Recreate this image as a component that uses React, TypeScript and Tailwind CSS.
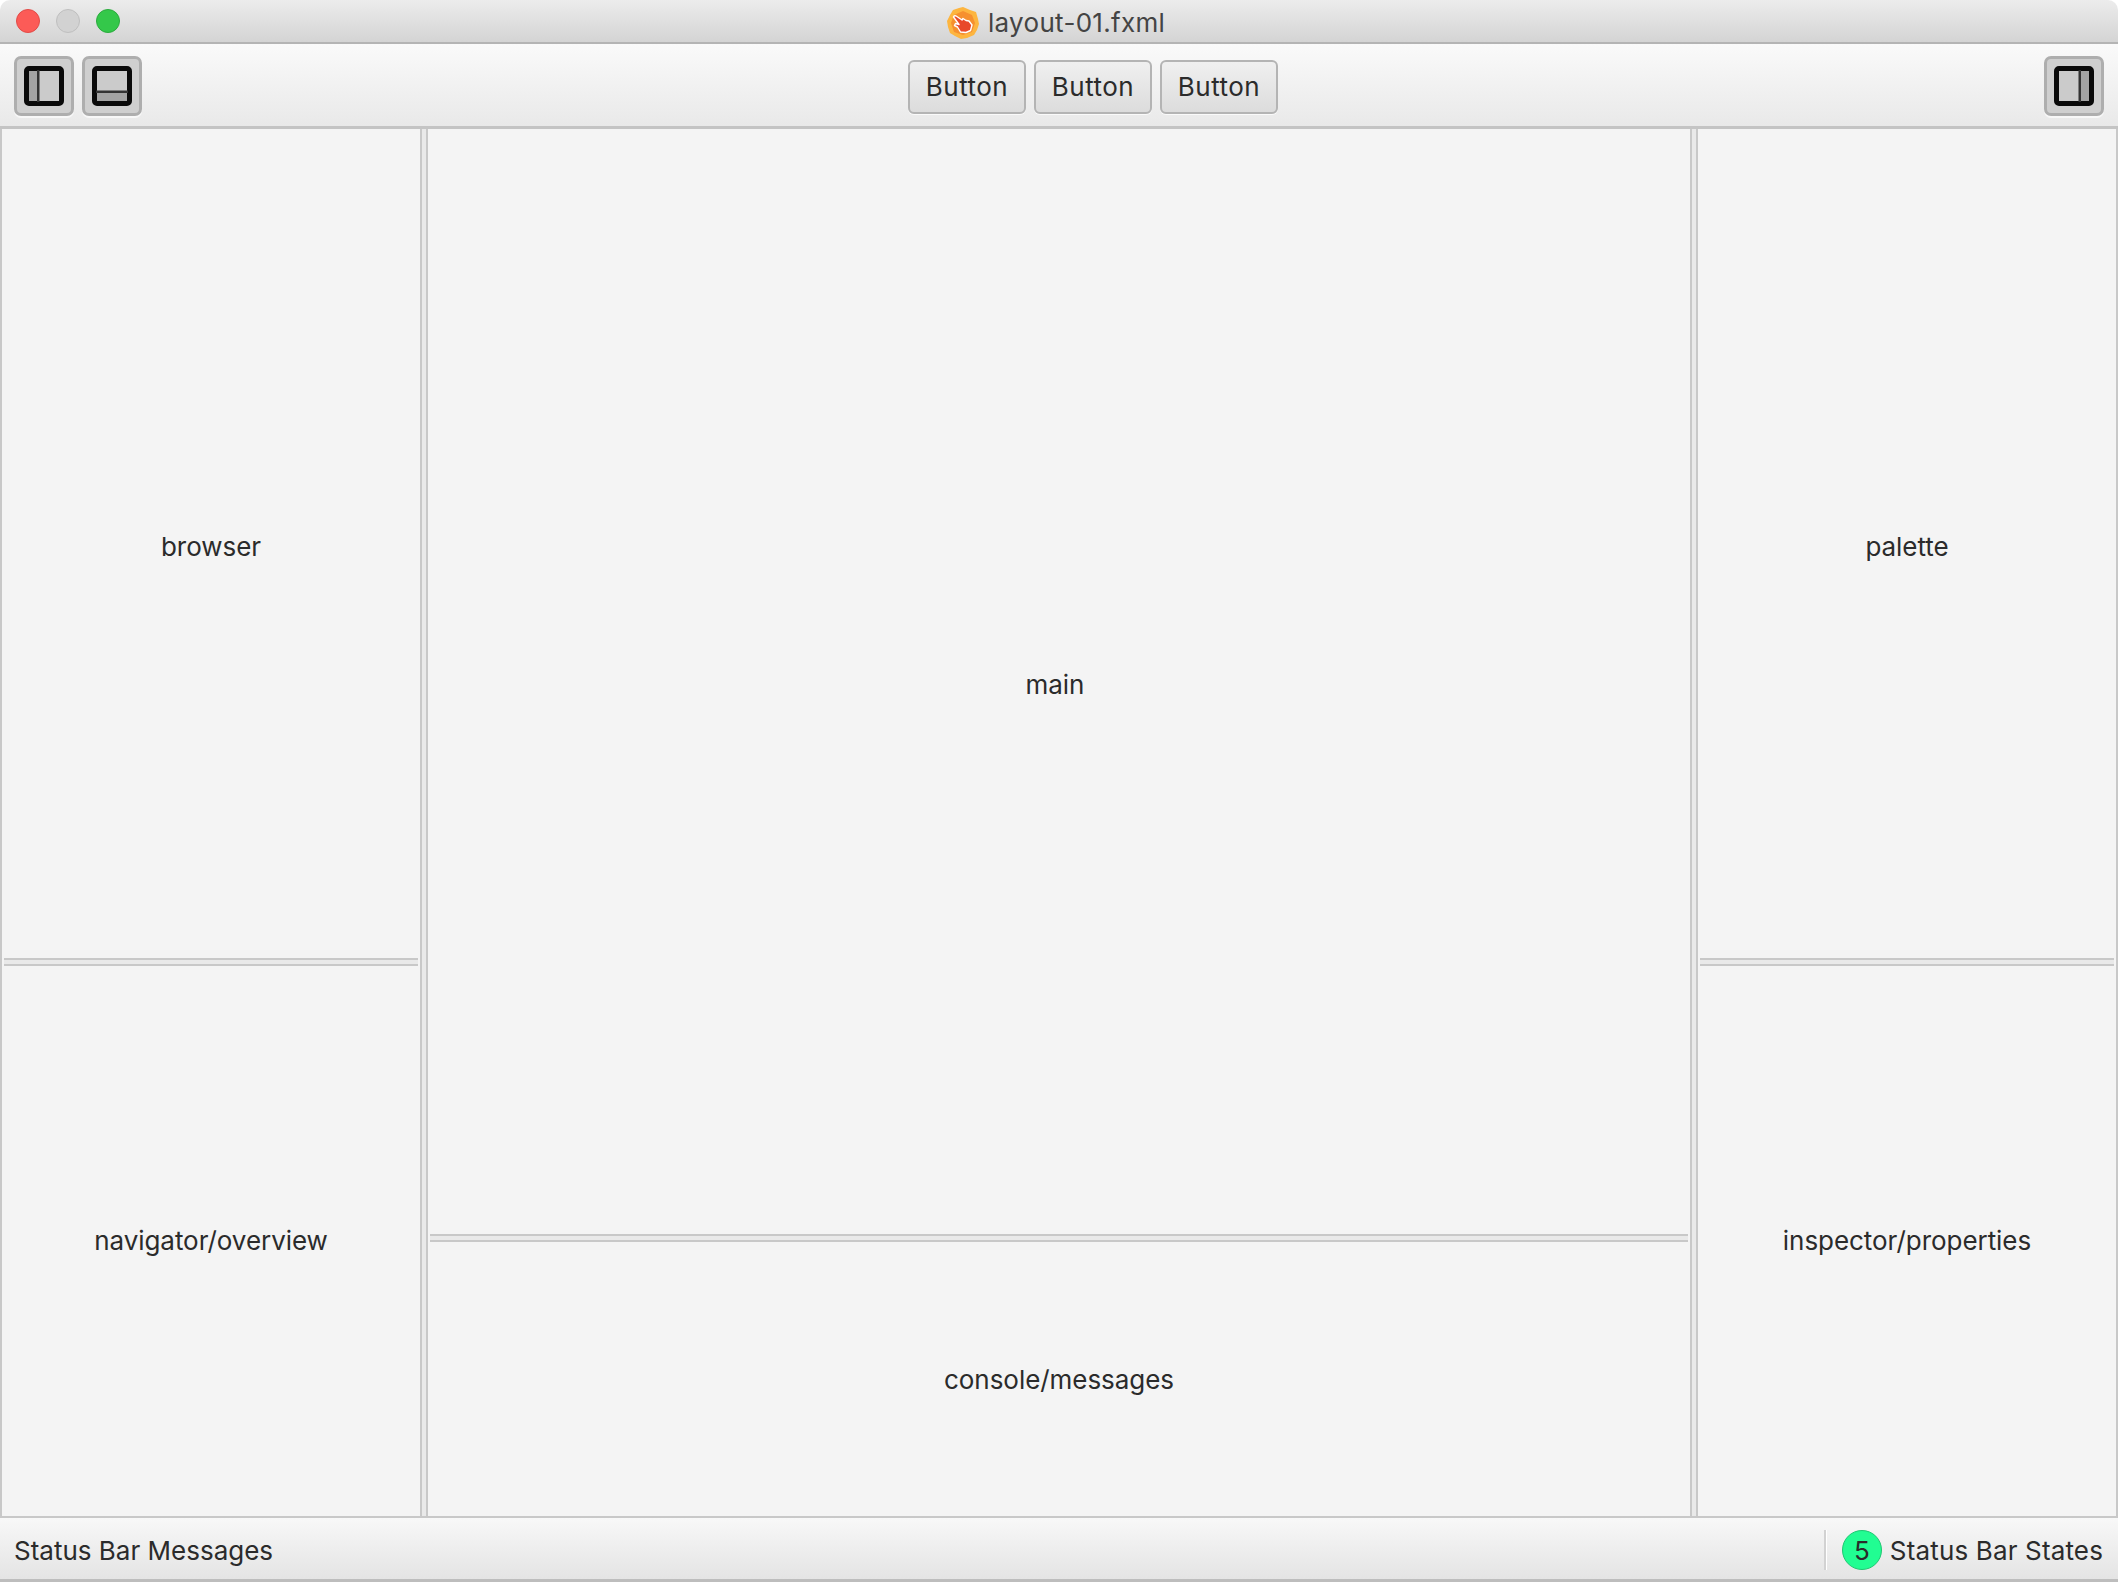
const font = "font-['Inter','Liberation_Sans',sans-serif]";

function Logo() {
  return (
    <svg viewBox="0 0 32 32" className="w-8 h-8 shrink-0">
      <path d="M16 0 L23 3 L29 5 L31 12 L32 17 L30 23 L27 28 L20 31 L14 32 L8 29 L3 26 L1 20 L0 14 L3 8 L6 3 L12 1 Z" fill="#fdb53f" />
      <path d="M16 4 L25 8 L28 16 L25 25 L16 28 L7 25 L4 16 L7 8 Z" fill="#f6902f" />
      <path
        d="M6.5 10 C7 8.5 8.5 8.5 9.5 9.2 L15 13 L16 11.5 L19 13.5 L22 14 L25 18 L23.5 23.5 L19 25.5 L13.5 25 L10.5 20 L7.5 18.5 L8.5 16.5 L12 17.5 Z"
        fill="#e8482a"
        stroke="#fff"
        strokeWidth="1.4"
        strokeLinejoin="round"
      />
    </svg>
  );
}

function TrafficLight({ className }: { className: string }) {
  return <span className={`w-6 h-6 rounded-full border ${className}`} />;
}

// the split is the only thing that changes between the three toggle icons
function PaneIcon({ side }: { side: "left" | "bottom" | "right" }) {
  return (
    <button className="w-[60px] h-[60px] rounded-[7px] bg-[#cfcfcf] border-[3px] border-[#aeaeae] flex items-center justify-center shadow-[0_2px_0_#f8f8f8]">
      <svg viewBox="0 0 40 40" className="w-10 h-10 blur-[0.5px]">
        <rect x="2.5" y="2.5" width="35" height="35" rx="2.5" fill="#cbcbcb" stroke="#0a0a0a" strokeWidth="5" />
        {side === "left" && (
          <>
            <rect x="5" y="5" width="9" height="30" fill="#a3a3a3" />
            <rect x="13" y="4" width="2.5" height="32" fill="#333" />
          </>
        )}
        {side === "right" && (
          <>
            <rect x="26" y="5" width="9" height="30" fill="#a3a3a3" />
            <rect x="24.5" y="4" width="2.5" height="32" fill="#333" />
          </>
        )}
        {side === "bottom" && (
          <>
            <rect x="5" y="26" width="30" height="9" fill="#a3a3a3" />
            <rect x="4" y="24.5" width="32" height="2.5" fill="#333" />
          </>
        )}
      </svg>
    </button>
  );
}

function ToolButton() {
  return (
    <button className="w-[118px] h-[54px] pb-[2px] rounded-[6px] border-2 border-[#b4b4b4] bg-gradient-to-b from-[#f0f0f0] to-[#dcdcdc] text-[26px] tracking-[0.5px] text-[#2b2b2b] shadow-[0_1px_0_#fafafa]">
      Button
    </button>
  );
}

function Pane({ label, className = "" }: { label: string; className?: string }) {
  return (
    <div className={`flex items-center justify-center text-[26px] tracking-[-0.05px] text-[#2b2b2b] bg-[#f4f4f4] ${className}`}>
      {label}
    </div>
  );
}

function HDivider() {
  return <div className="h-2 mx-[2px] shrink-0 border-y-2 border-[#c8c8c8] bg-[#e9e9e9]" />;
}

function VDivider() {
  return <div className="w-2 shrink-0 border-x-2 border-[#c8c8c8] bg-[#e9e9e9]" />;
}

export default function App() {
  return (
    <div className={`w-[2118px] h-[1582px] flex flex-col overflow-hidden bg-white ${font}`}>
      {/* Title bar */}
      <div className="h-11 shrink-0 relative flex items-center rounded-t-[10px] border-b-2 border-[#b4b4b4] bg-gradient-to-b from-[#ececec] to-[#d4d4d4]">
        <div className="flex items-center gap-4 pl-4">
          <TrafficLight className="bg-[#fc5b57] border-[#e24b47]" />
          <TrafficLight className="bg-[#d2d2d2] border-[#bfbfbf]" />
          <TrafficLight className="bg-[#34c84a] border-[#2bab3e]" />
        </div>
        <div className="absolute left-[947px] top-[6px] flex items-center gap-[9px] text-[26px] leading-8 tracking-[0.3px] text-[#444]">
          <Logo />
          <span className="pt-[1px]">layout-01.fxml</span>
        </div>
      </div>

      {/* Toolbar */}
      <div className="h-[85px] shrink-0 flex items-center justify-between pl-[14px] pr-[14px] pt-[2px] border-b-[3px] border-[#c4c4c4] bg-gradient-to-b from-[#fafafa] to-[#e9e9e9]">
        <div className="flex gap-[8px]">
          <PaneIcon side="left" />
          <PaneIcon side="bottom" />
        </div>
        <div className="flex gap-2 mt-[2px]">
          <ToolButton />
          <ToolButton />
          <ToolButton />
        </div>
        <PaneIcon side="right" />
      </div>

      {/* Panes */}
      <div className="flex-1 min-h-0 flex bg-[#f4f4f4] border-b-2 border-[#c8c8c8] border-x-2">
        <div className="w-[418px] shrink-0 flex flex-col">
          <Pane label="browser" className="h-[829px] shrink-0 pt-[6px]" />
          <HDivider />
          <Pane label="navigator/overview" className="flex-1 pb-[2px]" />
        </div>
        <VDivider />
        <div className="flex-1 flex flex-col">
          <Pane label="main" className="h-[1105px] shrink-0 pr-2 pt-[6px]" />
          <HDivider />
          <Pane label="console/messages" className="flex-1" />
        </div>
        <VDivider />
        <div className="w-[418px] shrink-0 flex flex-col">
          <Pane label="palette" className="h-[829px] shrink-0 pt-[6px]" />
          <HDivider />
          <Pane label="inspector/properties" className="flex-1 pb-[2px]" />
        </div>
      </div>

      {/* Status bar */}
      <div className="h-[64px] shrink-0 flex items-center justify-between pl-[14px] pr-[15px] pt-[3px] border-b-[3px] border-[#bdbdbd] bg-gradient-to-b from-[#f8f8f8] to-[#e4e4e4] text-[26px] text-[#2b2b2b]">
        <span>Status Bar Messages</span>
        <div className="flex items-center h-10">
          <div className="w-[3px] h-10 bg-[#d2d2d2] mr-[15px] border-r border-white" />
          <span className="w-10 h-10 rounded-full bg-[#21fd92] border border-[#1fc772] flex items-center justify-center mr-2">5</span>
          <span className="tracking-[0.15px]">Status Bar States</span>
        </div>
      </div>
    </div>
  );
}
